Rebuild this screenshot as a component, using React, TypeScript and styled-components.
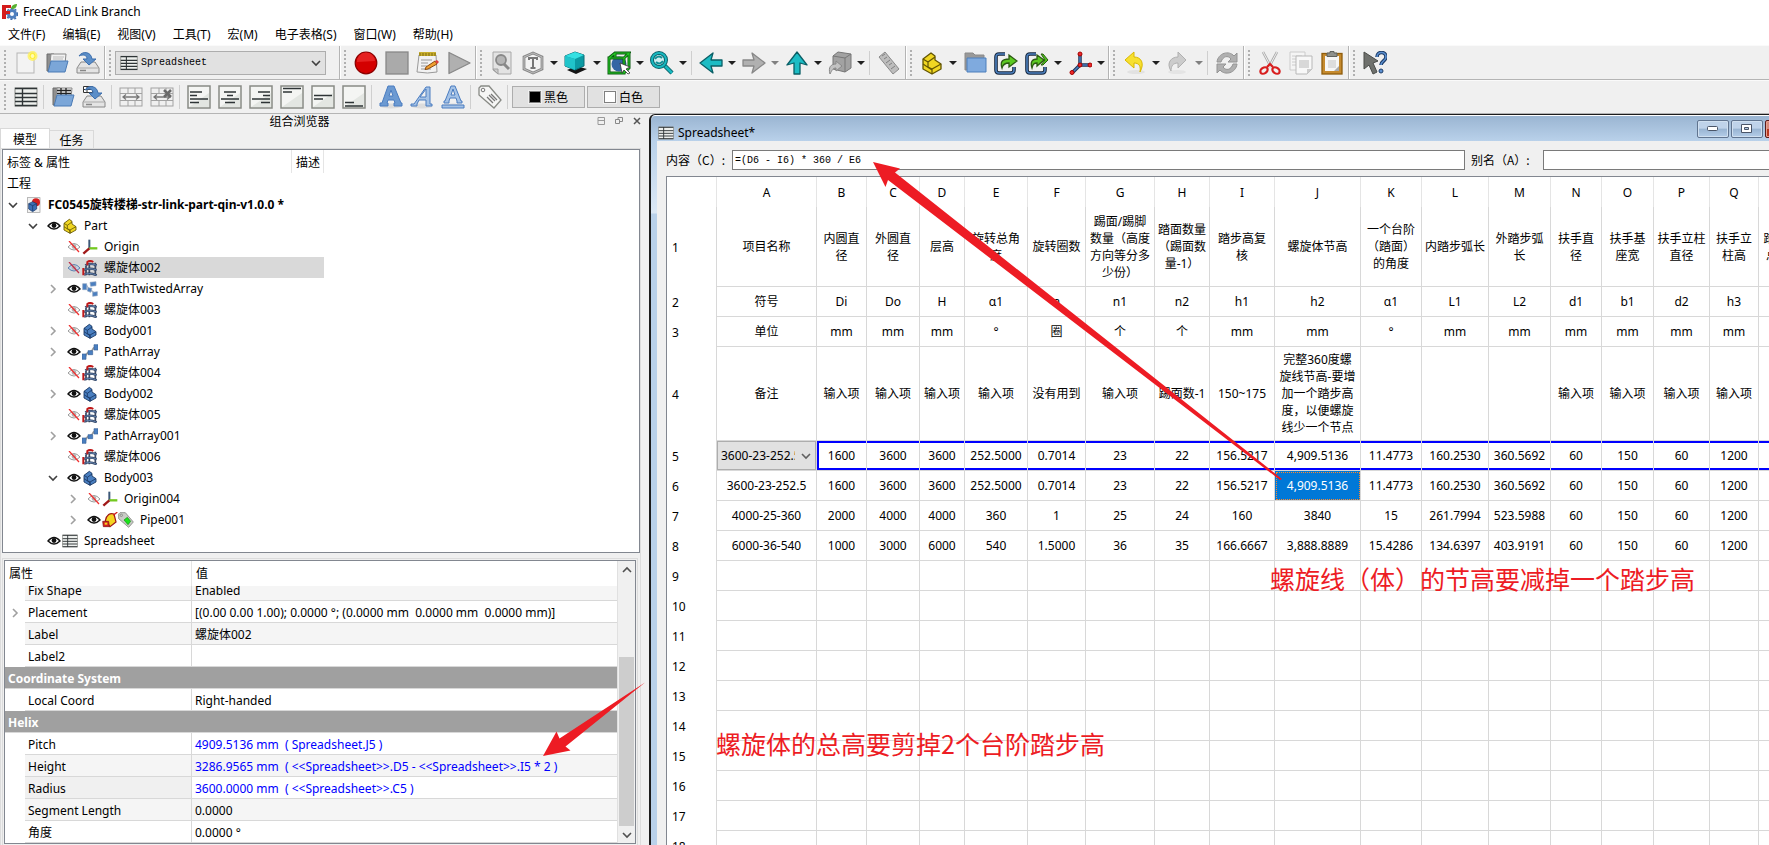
import React from 'react';
import styled, { createGlobalStyle, css } from 'styled-components';

const uiFont = `'Noto Sans', 'Noto Sans CJK SC', sans-serif`;
const cjkFont = `'Noto Sans CJK SC', sans-serif`;
const monoFont = `'Liberation Mono', 'Noto Sans CJK SC', monospace`;

const GlobalStyle = createGlobalStyle`
  *, *::before, *::after { box-sizing: border-box; }
  html, body { margin: 0; padding: 0; background: #f0f0f0; overflow: hidden; }
  body { font-family: ${uiFont}; font-size: 12px; line-height: 16px; color: #000; }
  button, input, select { font: inherit; color: inherit; margin: 0; }
  svg { display: block; flex: none; }
`;

/* ---------- window frame ---------- */

const Window = styled.div`
  position: relative;
  display: flex;
  flex-direction: column;
  height: 100vh;
  min-width: 0;
  overflow: hidden;
  background: #f0f0f0;
`;

const TitleBar = styled.header`
  display: flex;
  align-items: center;
  gap: 5px;
  height: 24px;
  padding-left: 2px;
  background: #fff;
  h1 { margin: 0; font-size: 12px; font-weight: 400; }
`;

const MenuBar = styled.nav`
  display: flex;
  align-items: center;
  gap: 17px;
  height: 21px;
  padding-left: 8px;
  background: #fff;
`;

const MenuItem = styled.button`
  border: 0;
  padding: 0;
  background: none;
  white-space: nowrap;
`;

/* ---------- toolbars ---------- */

const ToolbarRow = styled.div<{ $first?: boolean }>`
  display: flex;
  height: ${p => (p.$first ? 35 : 34)}px;
  flex: none;
  background: #f0f0f0;
  border-top: 1px solid #fafafa;
  border-bottom: 1px solid #b4b4b4;
`;

const Group = styled.div<{ $open?: boolean; $wide?: boolean }>`
  display: flex;
  align-items: center;
  padding-right: ${p => (p.$wide ? 13 : 1)}px;
  border-right: ${p => (p.$open ? 0 : '1px solid #b4b4b4')};
  box-shadow: ${p => (p.$open ? 'none' : '1px 0 0 #fff')};
`;

const Handle = styled.span`
  flex: none;
  width: 2px;
  height: 26px;
  margin: 0 4px;
  background: repeating-linear-gradient(#b0b0b0 0 2px, transparent 2px 4px);
`;

const Tool = styled.button`
  display: flex;
  align-items: center;
  border: 0;
  padding: 0;
  background: none;
  height: 32px;
`;

const ToolIcon = styled.span`
  display: flex;
  justify-content: center;
  width: 31px;
`;

const DropMark = styled.span<{ $dim?: boolean }>`
  width: 12px;
  display: flex;
  justify-content: center;
  color: ${p => (p.$dim ? '#808080' : '#202020')};
`;

const Rule = styled.span`
  flex: none;
  width: 1px;
  height: 24px;
  margin: 0 3px 0 2px;
  background: #cfcfcf;
`;

const Combo = styled.div`
  display: flex;
  align-items: center;
  width: 211px;
  height: 24px;
  padding: 0 4px 0 4px;
  gap: 3px;
  background: #e1e1e1;
  border: 1px solid #adadad;
  select {
    flex: 1;
    min-width: 0;
    appearance: none;
    border: 0;
    padding: 0;
    background: none;
    font-family: ${monoFont};
    font-size: 10px;
  }
`;

const ColorButton = styled.button`
  display: flex;
  align-items: center;
  justify-content: center;
  gap: 3px;
  width: 73px;
  height: 22px;
  margin-left: 1px;
  margin-right: 1px;
  padding: 0;
  border: 1px solid #adadad;
  background: #e1e1e1;
  font-family: ${cjkFont};
`;

const Swatch = styled.span<{ $color: string }>`
  width: 12px;
  height: 12px;
  background: ${p => p.$color};
  border: 1px solid #808080;
  outline: 1px solid #f0f0f0;
`;

/* ---------- dock on the left ---------- */

const Main = styled.main`
  display: grid;
  grid-template-columns: 649px minmax(0, 1fr);
  flex: 1;
  min-height: 0;
`;

const Dock = styled.aside`
  display: flex;
  flex-direction: column;
  min-height: 0;
  min-width: 0;
`;

const DockTitle = styled.div`
  display: grid;
  grid-template-columns: 1fr auto;
  align-items: center;
  height: 14px;
  padding-right: 6px;
  font-family: ${cjkFont};
  h2 { margin: 0; padding-left: 4px; font-size: 12px; line-height: 14px; font-weight: 400; text-align: center; }
`;

const DockButtons = styled.div`
  display: flex;
  gap: 6px;
  button { border: 0; padding: 0; background: none; width: 12px; height: 12px; }
`;

const Tabs = styled.div`
  display: flex;
  align-items: flex-end;
  height: 20px;
`;

const Tab = styled.button<{ $active?: boolean }>`
  height: ${p => (p.$active ? 20 : 18)}px;
  width: ${p => (p.$active ? 50 : 44)}px;
  padding: 0;
  font-family: ${cjkFont};
  border: 1px solid #d9d9d9;
  border-bottom: 0;
  border-left: ${p => (p.$active ? '1px solid #d9d9d9' : 0)};
  background: ${p => (p.$active ? '#fff' : '#f0f0f0')};
`;

const TabPane = styled.div`
  display: flex;
  flex-direction: column;
  flex: 1;
  min-height: 0;
  border: 1px solid #dcdcdc;
  border-bottom: 0;
  margin-right: 8px;
  padding-left: 1px;
`;

const Tree = styled.section`
  flex: none;
  background: #fff;
  border: 1px solid #828790;
  padding-bottom: 1px;
`;

const TreeHeader = styled.div`
  display: grid;
  grid-template-columns: 289px 32px;
  height: 23px;
  span {
    display: flex;
    align-items: center;
    padding-left: 4px;
    padding-top: 2px;
    border-right: 1px solid #e5e5e5;
  }
`;

const TreeRow = styled.div<{ $depth: number }>`
  display: flex;
  align-items: center;
  width: 321px;
  height: 21px;
  padding-left: ${p => p.$depth * 20}px;
`;

const TreeRoot = styled.div`
  height: 21px;
  line-height: 22px;
  padding-left: 4px;
`;

const Toggle = styled.button`
  width: 20px;
  height: 20px;
  display: flex;
  align-items: center;
  justify-content: center;
  border: 0;
  padding: 0;
  background: none;
`;

const NodeBody = styled.div<{ $selected?: boolean; $bold?: boolean }>`
  display: flex;
  align-items: center;
  flex: 1;
  height: 21px;
  padding-left: ${p => (p.$bold ? 3 : 4)}px;
  white-space: nowrap;
  font-weight: ${p => (p.$bold ? 700 : 400)};
  background: ${p => (p.$selected ? '#d9d9d9' : 'none')};
  gap: 1px;
  & > span { padding-left: 5px; }
`;

const Icons = styled.div`
  display: flex;
`;

const PropArea = styled.div`
  display: flex;
  flex: 1;
  min-height: 0;
  margin-top: 5px;
  margin-right: 2px;
  border: 1px solid #dcdcdc;
  border-bottom: 0;
  padding: 1px;
`;

const PropFrame = styled.section`
  display: flex;
  flex: 1;
  min-width: 0;
  background: #fff;
  border: 1px solid #828790;
`;

const PropMain = styled.div`
  display: flex;
  flex-direction: column;
  flex: 1;
  min-width: 0;
  border-right: 1px solid #e0e0e0;
`;

const PropHeader = styled.div`
  display: grid;
  grid-template-columns: 187px 1fr;
  flex: none;
  height: 25px;
  line-height: 25px;
  span { padding-left: 4px; }
  span:first-child { border-right: 1px solid #e5e5e5; }
`;

const PropScroll = styled.div`
  display: flex;
  flex-direction: column;
  justify-content: flex-end;
  flex: 1;
  min-height: 0;
  overflow: hidden;
`;

const PropTable = styled.table`
  flex: none;
  width: 100%;
  table-layout: fixed;
  border-collapse: separate;
  border-spacing: 0;
  th, td {
    padding: 2px 0 0;
    height: 22px;
    text-align: left;
    font-weight: 400;
    white-space: pre;
  }
`;

const PropToggle = styled.td`
  button { height: 18px; }
`;

const PropName = styled.th<{ $bg: string }>`
  background: ${p => p.$bg};
  border-right: 1px solid #d8d8d8;
  border-bottom: 1px solid #d8d8d8;
  && { padding-left: 3px; }
`;

const PropValue = styled.td<{ $bg: string; $bound?: boolean }>`
  background: ${p => p.$bg};
  border-bottom: 1px solid #d8d8d8;
  color: ${p => (p.$bound ? '#0000ff' : '#000')};
  && { padding-left: 3px; }
`;

const PropCategory = styled.th`
  background: #a0a0a0;
  border-bottom: 1px solid #d8d8d8;
  color: #fff;
  && { padding-left: 3px; font-weight: 700; }
`;

const ScrollBar = styled.div`
  display: flex;
  flex-direction: column;
  align-items: center;
  width: 17px;
  background: #f0f0f0;
  button {
    display: flex;
    align-items: center;
    justify-content: center;
    width: 17px;
    height: 17px;
    border: 0;
    padding: 0;
    background: none;
  }
`;

const ScrollTrack = styled.div`
  display: flex;
  flex-direction: column;
  justify-content: flex-end;
  flex: 1;
  width: 15px;
  div { height: 68%; background: #cdcdcd; }
`;

/* ---------- spreadsheet window ---------- */

const SheetWindow = styled.section`
  display: flex;
  flex-direction: column;
  min-width: 0;
  min-height: 0;
  border-left: 2px solid #1c1c1c;
  border-top: 1px solid #1c1c1c;
  border-top-left-radius: 6px;
  background: linear-gradient(#99b4d1, #b9d1ea 26px, #dce8f5 98px, #b9d1ea 99px);
  box-shadow: inset 0 1px 0 #fff;
`;

const SheetTitle = styled.div`
  display: flex;
  align-items: center;
  gap: 4px;
  height: 26px;
  flex: none;
  padding-left: 7px;
  padding-top: 10px;
  h2 { flex: 1; margin: 0; font-size: 12px; line-height: 16px; font-weight: 400; }
`;

const Caption = styled.div`
  display: flex;
  gap: 2px;
  flex: none;
  width: 72px;
  margin-top: -8px;
  overflow: hidden;
`;

const CaptionButton = styled.button<{ $close?: boolean }>`
  display: flex;
  flex: none;
  align-items: center;
  justify-content: center;
  width: 32px;
  height: 18px;
  padding: 0;
  border: 1px solid ${p => (p.$close ? '#5b1a1a' : '#60748f')};
  border-radius: 2px;
  box-shadow: inset 0 0 0 1px ${p => (p.$close ? '#e8a090' : '#d0e0f0')};
  background: ${p =>
    p.$close
      ? 'linear-gradient(#d88a7a 50%, #b83820 50%)'
      : 'linear-gradient(#bfd3ea 45%, #98b4d2 50%, #b4cde8)'};
`;

const SheetBody = styled.div`
  display: flex;
  flex-direction: column;
  flex: 1;
  min-height: 0;
  margin-left: 6px;
  padding: 9px 0 0 9px;
  background: #f0f0f0;
`;

const FormulaRow = styled.div`
  display: grid;
  grid-template-columns: 66px minmax(0, 733fr) 78px minmax(0, 226fr);
  align-items: center;
  flex: none;
  height: 20px;
  margin-bottom: 6px;
  font-family: ${cjkFont};
  overflow: hidden;
`;

const FieldLabel = styled.label<{ $gap?: boolean }>`
  padding-left: ${p => (p.$gap ? 6 : 0)}px;
  white-space: nowrap;
`;

const Field = styled.input<{ $cut?: boolean }>`
  width: 100%;
  height: 20px;
  padding: 0 2px;
  border: 1px solid #7a7a7a;
  border-right-width: ${p => (p.$cut ? 0 : 1)}px;
  border-radius: 0;
  background: #fff;
  && { font-family: ${monoFont}; font-size: 10px; }
  outline: 0;
`;

const GridFrame = styled.div`
  flex: 1;
  min-height: 0;
  overflow: hidden;
  background: #fff;
  border-top: 1px solid #828790;
  border-left: 1px solid #828790;
`;

const Grid = styled.table`
  width: 1186px;
  table-layout: fixed;
  border-collapse: separate;
  border-spacing: 0;
  text-align: center;
  white-space: pre;
  line-height: 17px;
  th, td { padding: 0; font-weight: 400; overflow: hidden; }
`;

const ColHead = styled.th`
  height: 30px;
  border-right: 1px solid #e5e5e5;
`;

const RowHead = styled.th`
  border-right: 1px solid #d8d8d8;
  text-align: left;
  && { padding-left: 5px; }
`;

const Row = styled.tr<{ $h: number }>`
  height: ${p => p.$h}px;
`;

const Cell = styled.td<{ $band?: boolean; $bandStart?: boolean; $current?: boolean }>`
  border-right: 1px solid #d8d8d8;
  border-bottom: 1px solid #d8d8d8;
  ${p =>
    p.$band &&
    css`
      box-shadow: inset 0 2px 0 #0000ff, inset 0 -2px 0 #0000ff${p.$bandStart ? ', inset 2px 0 0 #0000ff' : ''};
    `}
  ${p =>
    p.$current &&
    css`
      background: #0078d7;
      color: #fff;
      outline: 1px dotted #ff8728;
      outline-offset: -2px;
    `}
`;

const CellCombo = styled.div`
  display: flex;
  align-items: center;
  height: 29px;
  padding: 0 4px 0 3px;
  gap: 6px;
  border: 1px solid #adadad;
  background: #e1e1e1;
  select { flex: 1; min-width: 0; appearance: none; border: 0; padding: 0; background: none; }
`;

/* ---------- red annotations laid over the window ---------- */

const Arrows = styled.svg`
  position: absolute;
  left: 0;
  top: 0;
  pointer-events: none;
`;

const Note = styled.p<{ $x: number; $y: number }>`
  position: absolute;
  left: ${p => p.$x}px;
  top: ${p => p.$y}px;
  margin: 0;
  font-family: ${cjkFont};
  font-size: 25px;
  line-height: 32px;
  color: #ed1c24;
  white-space: nowrap;
  pointer-events: none;
`;

/* ---------- drawings ---------- */

const Svg = ({ s = 24, children }: { s?: number; children: React.ReactNode }) => (
  <svg width={s} height={s} viewBox="0 0 24 24" fill="none" aria-hidden="true">{children}</svg>
);

const TableArt = ({ s = 24 }: { s?: number }) => (
  <Svg s={s}>
    <rect x="1" y="3" width="22" height="18" fill="#eef0ee" stroke="#888a85" />
    <path d="M1 3.5h22M1 8.5h22M1 12.5h22M1 16.5h22M1 20.5h22M8.5 3v18" stroke="#2e3436" strokeWidth="1.4" />
  </Svg>
);

const FolderArt = ({ grid }: { grid?: boolean }) => (
  <Svg>
    <path d="M2 3h7l1 2h8v15H2z" fill="#8f8f8f" stroke="#6c6c6c" />
    <path d="M6 3h15l-1 10H5z" fill="#f2f2f2" stroke="#888" />
    {grid ? <path d="M6 5.5h14M6 8.5h14M10 3v8M15 3v8" stroke="#222" strokeWidth="1.3" /> : <path d="M8 6h11M8 8h10" stroke="#bbb" />}
    <path d="M6 10h17l-3 11H3z" fill="#7ba6d8" stroke="#4a7ab5" />
  </Svg>
);

const SaveArt = ({ grid }: { grid?: boolean }) => (
  <Svg>
    <path d="M5 11h14l4 6v5H1v-5z" fill="#e4e4e4" stroke="#888" />
    <path d="M1.5 17h21" stroke="#aaa" />
    <path d="M4 19.5h6" stroke="#888" strokeWidth="1.5" />
    {grid && <path d="M1.5 1.5h9v6h-9zM1.5 4.5h9M5 1.5v6" fill="#fff" stroke="#333" />}
    <path d="M3 5C6 0 15 0 16 8h4l-7 6-6-6h4C11 4 7 3 3 5z" fill="#5b8ec8" stroke="#3d6fae" />
  </Svg>
);

const PageArt = ({ children }: { children: React.ReactNode }) => (
  <Svg>
    <rect x="1" y="1" width="22" height="22" fill="#f4f5f3" stroke="#888a85" strokeWidth="1.5" />
    <path d="M2 22L22 8v14z" fill="#e3e6e2" />
    {children}
  </Svg>
);

const alignLines = (d: string) => <PageArt><path d={d} stroke="#2e3436" strokeWidth="1.7" /></PageArt>;

const MergeArt = ({ split }: { split?: boolean }) => (
  <Svg>
    <rect x="1" y="3" width="22" height="18" fill="#f0f0f0" stroke="#a2a2a2" />
    <path d="M1 8.5h22M1 15.5h22M9 3v5M16 3v5M9 16v5M16 16v5" stroke="#a2a2a2" />
    <path d="M4 12h16M7 9.5L4 12l3 2.5M17 9.5l3 2.5-3 2.5" stroke="#777" strokeWidth="1.3" />
    {split && <path d="M14 5l7 7M21 5l-7 7" stroke="#6a6a6a" strokeWidth="2.5" />}
  </Svg>
);

const LetterArt = ({ kind }: { kind: 'bold' | 'italic' | 'under' }) => (
  <Svg>
    <ellipse cx="12" cy="21" rx="11" ry="2.5" fill="#dcdcdc" />
    {kind === 'italic' ? (
      <path d="M1 21h6v-2l2-4h7v6h6v-2h-2V2h-4L4 19H1zM10 12l6-8v8z" fill="#a4c2e6" stroke="#4a7cc0" fillRule="evenodd" />
    ) : kind === 'bold' ? (
      <path d="M1 21h8v-3H8l1-3h6l1 3h-1v3h8v-3h-1L15 1H9L3 18H1zM10 11l2-6 2 6z" fill="#6c9ad2" stroke="#4a7cc0" fillRule="evenodd" />
    ) : (
      <path d="M1 23h22v-3H1zM3 18h5v-2l1-3h6l1 3v2h5v-2h-1L14 1h-4L4 16H3zM10 10l2-6 2 6z" fill="#a4c2e6" stroke="#4a7cc0" fillRule="evenodd" />
    )}
  </Svg>
);

const TagArt = ({ s = 24, green }: { s?: number; green?: boolean }) => (
  <Svg s={s}>
    <path d="M1 3l2-2h8l12 14-7 8L1 10z" fill={green ? '#c9ccc6' : '#f6f6f5'} stroke="#888a85" strokeWidth="1.3" />
    <circle cx="5" cy="5" r="1.8" stroke="#777" />
    {green ? <path d="M9 12l5-4 5 6-4 5z" fill="#19e619" stroke="#168a16" /> : <path d="M11 10l6 6M13 9l6 6M9 12l6 6" stroke="#777" strokeWidth="1.3" />}
  </Svg>
);

const CubeArt = () => (
  <Svg>
    <path d="M3 19l9-4 11 3-11 5z" fill="#151515" />
    <path d="M1 5l10-4 9 3v11l-9 4-10-4z" fill="#0c9aa3" stroke="#0a6f78" />
    <path d="M1 5l10-4 9 3-9 4z" fill="#34e0e2" />
    <path d="M1 5l10 3v11L1 15z" fill="#20c4ca" />
  </Svg>
);

const BoxSelArt = () => (
  <Svg>
    <circle cx="12" cy="13" r="7.5" fill="#3465a4" />
    <path d="M2 7h15v15H2zM2 7l6-5h14l-5 5M22 2v15l-5 5M8 2v4" stroke="#0b5a10" strokeWidth="3" />
    <path d="M2 7h15v15H2zM2 7l6-5h14l-5 5M22 2v15l-5 5M8 2v4" stroke="#22c522" strokeWidth="1.2" />
    <path d="M13 12l10 4-4 2 4 4-2 1-4-4-2 3z" fill="#fff" stroke="#333" strokeWidth=".8" />
  </Svg>
);

const LensArt = () => (
  <Svg>
    <path d="M14 14l8 8" stroke="#0a5f66" strokeWidth="4.5" />
    <path d="M14 14l8 8" stroke="#18b8c0" strokeWidth="2.5" />
    <circle cx="9" cy="9" r="7" fill="#cfeef0" stroke="#0a5f66" strokeWidth="4" />
    <circle cx="9" cy="9" r="7" stroke="#18b8c0" strokeWidth="2" />
    <path d="M5 8c2-3 5-3 7-1M13 10c-2 3-5 3-7 1" stroke="#0f8f96" strokeWidth="2" />
  </Svg>
);

const ArrowArt = ({ dir, dim }: { dir: 'l' | 'r' | 'u'; dim?: boolean }) => {
  const turn = dir === 'l' ? 0 : dir === 'u' ? 90 : 180;
  return (
    <Svg>
      <g transform={`rotate(${turn} 12 12)`}>
        <path d="M1 12L14 2l-2 7h11v6H12l2 7z" fill={dim ? '#b0b0b0' : '#1cbcc4'} stroke={dim ? '#888' : '#0a5f66'} strokeWidth="1.3" strokeLinejoin="round" />
      </g>
    </Svg>
  );
};

const IsoArt = ({ color, dark }: { color: string; dark: string }) => (
  <>
    <path d="M3 12V8l8-6 4 3v4l6 4v5l-9 5-9-5z" fill={color} stroke={dark} strokeWidth="1.3" strokeLinejoin="round" />
    <path d="M3 8l5 3 7-5M8 11v5l4 2 9-5M3 13l9 6v4M12 18v5" stroke={dark} strokeWidth="1.2" />
  </>
);

const LinkArt = ({ twice }: { twice?: boolean }) => (
  <Svg>
    <path d="M11 3H5Q2 3 2 6v13q0 3 3 3h12q3 0 3-3v-3" stroke="#16263c" strokeWidth="3.6" />
    <path d="M11 3H5Q2 3 2 6v13q0 3 3 3h12q3 0 3-3v-3" stroke="#4b7fbd" strokeWidth="1.6" />
    {twice && <path d="M16 3h2l5 6-5 5h-2l4-5z" fill="#4fc51b" stroke="#2c5a12" />}
    <path d={twice ? 'M7 17c-2-6 0-9 5-9V4l7 5-7 6v-3c-3 0-4 1-5 5z' : 'M8 17c-2-6 0-9 7-9V4l8 6-8 6v-4c-4 0-6 1-7 5z'} fill="#5cc922" stroke="#2c5a12" strokeWidth="1.3" />
  </Svg>
);

const AxesArt = () => (
  <Svg>
    <path d="M12 3v11M12 14h10M12 14l-8 8" stroke="#1c3354" strokeWidth="3.5" />
    <path d="M12 3v11M12 14h10M12 14l-8 8" stroke="#4a7ec0" strokeWidth="1.5" />
    {[[12, 3], [12, 14], [22, 14], [4, 21.5]].map(([x, y]) => <circle key={`${x}-${y}`} cx={x} cy={y} r="2" fill="#ef2929" stroke="#a40000" />)}
  </Svg>
);

const art: Record<string, React.ReactNode> = {
  new: <Svg><rect x="3" y="2" width="17" height="20" fill="#f3f3f3" stroke="#b5b5b5" /><circle cx="18.5" cy="5" r="5" fill="#fff15a" opacity=".8" /><circle cx="18.5" cy="5" r="2.5" fill="#fffbb0" stroke="#ffee20" /></Svg>,
  open: <FolderArt />,
  save: <SaveArt />,
  record: <Svg><circle cx="12" cy="12" r="10.8" fill="#d40000" stroke="#8a0000" strokeWidth="1.2" /><path d="M3 11a9 9 0 0 1 18-1" fill="#e62222" /></Svg>,
  stop: <Svg><rect x="1" y="1" width="22" height="22" fill="#aaa" stroke="#888" strokeWidth="1.3" /></Svg>,
  note: <Svg><path d="M3 4h17l1 17q-9 2-20 0z" fill="#f2f2f2" stroke="#999" /><path d="M3 1h17v4H3z" fill="#c8ae2e" /><path d="M4 2v3M7 2v3M10 2v3M13 2v3M16 2v3M19 2v3" stroke="#7d6a10" /><path d="M5 9h11M5 12h7M5 15h6M5 18h10" stroke="#999" /><path d="M10 16l9-6 2 3-9 5-3 .5z" fill="#f0a030" stroke="#8a4a10" /><path d="M19 10l2-1 2 2-2 2z" fill="#e04040" /></Svg>,
  play: <Svg><path d="M2 1.5L23 12 2 22.5z" fill="#b0b0b0" stroke="#888" strokeWidth="1.3" strokeLinejoin="round" /></Svg>,
  preview: <Svg><path d="M3 1h18v22H8l-5-4z" fill="#e3e3e3" stroke="#a8a8a8" /><path d="M3 18l5 5v-5z" fill="#ccc" stroke="#a0a0a0" /><circle cx="11" cy="9" r="5" fill="#b5b5b5" stroke="#888" strokeWidth="1.8" /><path d="M14 13l5 5" stroke="#888" strokeWidth="3" /></Svg>,
  text: <Svg><path d="M12 2l9 4v12l-9 4-9-4V6z" fill="#f4f4f4" stroke="#888" strokeWidth="2.8" /><path d="M12 2l9 4v12l-9 4-9-4V6z" stroke="#ccc" strokeWidth=".8" /><path d="M8 9V7h8v2M12 7v10M9.5 17h5" stroke="#777" strokeWidth="2" /></Svg>,
  cube: <CubeArt />,
  boxsel: <BoxSelArt />,
  lens: <LensArt />,
  back: <ArrowArt dir="l" />,
  forward: <ArrowArt dir="r" dim />,
  up: <ArrowArt dir="u" />,
  boxlink: <Svg><path d="M5 5l5-4 13 2v14l-6 4-12-3z" fill="#a2a2a2" stroke="#777" /><path d="M5 5l12 2v14M17 7l6-4" stroke="#777" /><path d="M2 23c-2-7 1-10 6-10v-3l6 5-6 5v-3c-3 0-4 2-6 6z" fill="#c2c2c2" stroke="#888" /></Svg>,
  ruler: <Svg><path d="M2 6l6-5 14 17-6 5z" fill="#bdbdbd" stroke="#8a8a8a" /><path d="M8 3L5 5M10 6L7 8M13 9l-4 3M15 12l-3 2M18 15l-4 3" stroke="#808080" /></Svg>,
  part: <Svg><IsoArt color="#f0d622" dark="#635503" /></Svg>,
  group: <Svg><path d="M2 2h8l2 2h9v15H2z" fill="#999" stroke="#8a8a8a" /><path d="M4 7h19v14H4z" fill="#7faade" stroke="#4d7ebc" /></Svg>,
  link: <LinkArt />,
  links: <LinkArt twice />,
  axes: <AxesArt />,
  undo: <Svg><ellipse cx="13" cy="21" rx="9" ry="2" fill="#e2e2e2" /><path d="M2 9l9-8v5c7 0 11 6 6 15 1-6-1-9-6-9v5z" fill="#f7e030" stroke="#d9b800" /></Svg>,
  redo: <Svg><ellipse cx="11" cy="21" rx="9" ry="2" fill="#e4e4e4" /><path d="M20 9l-8-8v5c-7 0-12 6-7 14 0-5 2-8 7-8v5z" fill="#ccc" stroke="#b0b0b0" /></Svg>,
  refresh: <Svg><path d="M2 11C3 2 14-1 19 5l3-3v9h-9l3-3C13 4 8 5 6 11zM22 13c-1 9-12 12-17 6l-3 3v-9h9l-3 3c3 4 8 3 10-3z" fill="#b0b0b0" stroke="#949494" /></Svg>,
  cut: <Svg><path d="M5 1l8 15M19 1l-8 15" stroke="#aaa" strokeWidth="2.6" /><path d="M5 1l8 15M19 1l-8 15" stroke="#eee" strokeWidth="1" /><ellipse cx="6" cy="19.5" rx="4" ry="2.8" transform="rotate(-35 6 19.5)" stroke="#d81e1e" strokeWidth="2.2" /><ellipse cx="18" cy="19.5" rx="4" ry="2.8" transform="rotate(35 18 19.5)" stroke="#d81e1e" strokeWidth="2.2" /><path d="M9 16l3-3 3 3" stroke="#d81e1e" strokeWidth="2.2" /></Svg>,
  copy: <Svg><path d="M1 1h15v18H1z" fill="#f5f5f5" stroke="#ccc" /><path d="M3 5h10M3 8h4M3 11h4M3 14h4" stroke="#ccc" /><path d="M7 5h16v13l-5 5H7z" fill="#f8f8f8" stroke="#b8b8b8" /><path d="M10 9h10v8H10z" fill="#d8d8d8" /><path d="M18 23v-5h5z" fill="#ccc" /></Svg>,
  paste: <Svg><rect x="2" y="2.5" width="20" height="20.5" fill="#c58a2e" stroke="#8f5c0c" strokeWidth="1.3" /><path d="M5 5h14v15H5z" fill="#f6f6f6" /><path d="M8 9h8v8H8z" fill="#ddd" /><path d="M14 20l5-5v5z" fill="#aaa" /><path d="M7 2h3V.5h4V2h3v3.5H7z" fill="#8f918c" stroke="#60625e" /></Svg>,
  help: <Svg><path d="M1 1l14 9-5 2 4 9-4 2-4-9-5 4z" fill="#6f716d" stroke="#4a4c49" /><path d="M14 6c0-6 9-6 9 0 0 4-5 4-5 8" stroke="#1e3c66" strokeWidth="3.6" /><path d="M14 6c0-6 9-6 9 0 0 4-5 4-5 8" stroke="#5b8fd0" strokeWidth="1.6" /><circle cx="18" cy="20" r="2" fill="#5b8fd0" stroke="#1e3c66" /></Svg>,
  table: <TableArt />,
  openSheet: <FolderArt grid />,
  saveSheet: <SaveArt grid />,
  merge: <MergeArt />,
  split: <MergeArt split />,
  left: alignLines('M3 7h12M3 10.5h7M3 14h18M3 17.5h9'),
  center: alignLines('M6 7h12M9 10.5h6M3 14h18M7 17.5h10'),
  right: alignLines('M9 7h12M14 10.5h7M3 14h18M12 17.5h9'),
  top: alignLines('M3 3.5h18M3 7h9'),
  middle: alignLines('M3 10.5h18M3 14h9'),
  bottom: alignLines('M3 17.5h9M3 21h18'),
  bold: <LetterArt kind="bold" />,
  italic: <LetterArt kind="italic" />,
  under: <LetterArt kind="under" />,
  tag: <TagArt />,
};

const helix = (
  <Svg s={16}>
    <path d="M6 23V9M20 23V4M11 23V6" stroke="#3b4a66" strokeWidth="2.600" />
    <path d="M5 8c4-3 12-2 17 0M3 15c5-3 13-2 19 0M3 22c5-3 13-2 19 1" stroke="#32435f" strokeWidth="3.400" />
    <path d="M5 8c4-3 12-2 17 0M3 15c5-3 13-2 19 0M3 22c5-3 13-2 19 1" stroke="#6d93c6" strokeWidth="1.200" />
    <path d="M2 23V12M8 8V3q4-3 9 0" stroke="#c01a1a" strokeWidth="3" />
  </Svg>
);
const body = <Svg s={16}><IsoArt color="#4a7fc0" dark="#16345f" /></Svg>;
const origin = <Svg s={16}><path d="M11 1v13" stroke="#3d5878" strokeWidth="3" /><path d="M11 14h12" stroke="#73c820" strokeWidth="3.5" /><path d="M11 14l-9 8" stroke="#a01818" strokeWidth="3.5" /></Svg>;
const pathArray = <Svg s={16}><path d="M5 19C7 8 14 16 18 5" stroke="#999" strokeWidth="2.5" /><path d="M0 15h6v8H0zM9 10h7v6H9zM18 1h6v8h-6z" fill="#4a7fc0" stroke="#3b639a" /></Svg>;
const twisted = <Svg s={16}><path d="M5 6c5 0 2 6 8 8s4 6 8 6" stroke="#a5b2c4" strokeWidth="2" /><path d="M1 4h6v9H1zM12 2l9-1v6l-8 1zM9 10l6 1-2 6-5-2zM16 17l7-1v6l-7 1z" fill="#4a7fc0" stroke="#8ea3c0" /></Svg>;

const nodeArt: Record<string, React.ReactNode> = {
  doc: <Svg s={16}><rect x="2" y="1" width="19" height="22" fill="#f2f2f2" stroke="#999" /><circle cx="15" cy="8" r="6" fill="#d42020" /><path d="M4 10l6-3 6 3v8l-6 4-6-4z" fill="#3d6fb4" stroke="#16345f" /><path d="M4 10l6 3 6-3M10 13v8" stroke="#16345f" /></Svg>,
  part: <Svg s={16}><IsoArt color="#f0d622" dark="#635503" /></Svg>,
  origin, helix, body, pathArray, twisted,
  pipe: <Svg s={16}><path d="M5 13C7 4 12 1 18 3l3 12-9 7z" fill="#f3d421" stroke="#a01818" strokeWidth="1.8" /><path d="M1 14h9l1 8H2z" fill="#d42020" stroke="#7a0c0c" /><path d="M4 16h4v3H4z" fill="#f3d421" /><path d="M17 5l6-5" stroke="#d42020" strokeWidth="2" /></Svg>,
  tag: <TagArt s={16} green />,
  table: <TableArt s={16} />,
};

const Eye = ({ off, blue }: { off?: boolean; blue?: boolean }) => (
  <svg width="14" height="12" viewBox="0 0 14 12" fill="none" aria-hidden="true">
    <path d="M1 6q6-7 12 0-6 6-12 0z" fill={blue ? '#c3d4ea' : '#fff'} stroke={off ? (blue ? '#5d82b0' : '#999') : '#111'} strokeWidth={off ? 1 : 1.4} />
    <circle cx="7" cy="5.5" r="2.4" fill={off ? '#b5b5b5' : '#111'} />
    {off && <path d="M2 0l10 11" stroke={blue ? '#c0304a' : '#f03030'} strokeWidth="1.3" />}
  </svg>
);

const Chevron = ({ dir, tone = '#404040' }: { dir: 'down' | 'right' | 'up'; tone?: string }) => (
  <svg width="10" height="10" viewBox="0 0 10 10" fill="none" aria-hidden="true">
    <path d={dir === 'down' ? 'M1 3l4 4 4-4' : dir === 'up' ? 'M1 7l4-4 4 4' : 'M3 1l4 4-4 4'} stroke={tone} strokeWidth="1.6" />
  </svg>
);

const AppLogo = () => (
  <svg width="16" height="16" viewBox="0 0 16 16" aria-hidden="true">
    <circle cx="10" cy="10" r="3.5" fill="none" stroke="#4f7fbe" strokeWidth="3" />
    <circle cx="10" cy="10" r="5.5" fill="none" stroke="#3f6fae" strokeWidth="1.5" strokeDasharray="2 2" />
    <path d="M0 1h9v3H4v3h4v3H4v5H0z" fill="#d41c1c" />
    <path d="M9 4c1-3 3-4 6-4 0 3-2 5-5 5z" fill="#58b030" />
  </svg>
);

/* ---------- data ---------- */

type ToolSpec = [string, string, ('menu' | 'dim')?] | '|';

const ToolList = ({ items }: { items: ToolSpec[] }) => (
  <>
    {items.map((it, i) =>
      it === '|' ? (
        <Rule key={i} />
      ) : (
        <Tool key={i} type="button" aria-label={it[1]}>
          <ToolIcon>{art[it[0]]}</ToolIcon>
          {it[2] && (
            <DropMark $dim={it[2] === 'dim'}>
              <svg width="8" height="4" viewBox="0 0 8 4" aria-hidden="true"><path d="M0 0h8L4 4z" fill="currentColor" /></svg>
            </DropMark>
          )}
        </Tool>
      )
    )}
  </>
);

const menus = ['文件(F)', '编辑(E)', '视图(V)', '工具(T)', '宏(M)', '电子表格(S)', '窗口(W)', '帮助(H)'];

const viewTools: ToolSpec[] = [
  ['preview', '适合全部'], ['text', '文本', 'menu'], ['cube', '立方体', 'menu'], ['boxsel', '框选', 'menu'], ['lens', '缩放', 'menu'], '|',
  ['back', '后退', 'menu'], ['forward', '前进', 'dim'], ['up', '向上', 'menu'], ['boxlink', '转到链接', 'menu'], '|', ['ruler', '测量'],
];
const structureTools: ToolSpec[] = [['part', '零件', 'menu'], ['group', '组'], ['link', '链接'], ['links', '链接组', 'menu'], ['axes', '坐标', 'menu']];
const editTools: ToolSpec[] = [['undo', '撤销', 'menu'], ['redo', '重做', 'dim'], '|', ['refresh', '刷新']];
const clipTools: ToolSpec[] = [['cut', '剪切'], ['copy', '复制'], ['paste', '粘贴']];
const sheetTools: ToolSpec[] = [
  ['table', '新建表格'], '|', ['openSheet', '导入'], ['saveSheet', '导出'], '|', ['merge', '合并'], ['split', '拆分'], '|',
  ['left', '左对齐'], ['center', '居中'], ['right', '右对齐'], ['top', '顶部'], ['middle', '中部'], ['bottom', '底部'], '|',
  ['bold', '粗体'], ['italic', '斜体'], ['under', '下划线'], '|', ['tag', '别名'], '|',
];

type Node = { depth: number; label: string; icons: string[]; eye?: 'on' | 'off'; open?: boolean; closed?: boolean; selected?: boolean; bold?: boolean };

const nodes: Node[] = [
  { depth: 0, label: 'FC0545旋转楼梯-str-link-part-qin-v1.0.0 *', icons: ['doc'], open: true, bold: true },
  { depth: 1, label: 'Part', icons: ['part'], eye: 'on', open: true },
  { depth: 2, label: 'Origin', icons: ['origin'], eye: 'off' },
  { depth: 2, label: '螺旋体002', icons: ['helix'], eye: 'off', selected: true },
  { depth: 2, label: 'PathTwistedArray', icons: ['twisted'], eye: 'on', closed: true },
  { depth: 2, label: '螺旋体003', icons: ['helix'], eye: 'off' },
  { depth: 2, label: 'Body001', icons: ['body'], eye: 'off', closed: true },
  { depth: 2, label: 'PathArray', icons: ['pathArray'], eye: 'on', closed: true },
  { depth: 2, label: '螺旋体004', icons: ['helix'], eye: 'off' },
  { depth: 2, label: 'Body002', icons: ['body'], eye: 'on', closed: true },
  { depth: 2, label: '螺旋体005', icons: ['helix'], eye: 'off' },
  { depth: 2, label: 'PathArray001', icons: ['pathArray'], eye: 'on', closed: true },
  { depth: 2, label: '螺旋体006', icons: ['helix'], eye: 'off' },
  { depth: 2, label: 'Body003', icons: ['body'], eye: 'on', open: true },
  { depth: 3, label: 'Origin004', icons: ['origin'], eye: 'off', closed: true },
  { depth: 3, label: 'Pipe001', icons: ['pipe', 'tag'], eye: 'on', closed: true },
  { depth: 1, label: 'Spreadsheet', icons: ['table'], eye: 'on' },
];

type Prop = { name: string; value?: string; nameBg?: string; bg?: string; bound?: boolean; toggle?: boolean };
const tint = '#f5f5f5';

const props: Prop[] = [
  { name: 'Fix Shape', value: 'Enabled', bg: tint },
  { name: 'Placement', value: '[(0.00 0.00 1.00); 0.0000 °; (0.0000 mm  0.0000 mm  0.0000 mm)]', toggle: true },
  { name: 'Label', value: '螺旋体002', bg: tint },
  { name: 'Label2', value: '' },
  { name: 'Coordinate System' },
  { name: 'Local Coord', value: 'Right-handed' },
  { name: 'Helix' },
  { name: 'Pitch', value: '4909.5136 mm  ( Spreadsheet.J5 )', bound: true },
  { name: 'Height', value: '3286.9565 mm  ( <<Spreadsheet>>.D5 - <<Spreadsheet>>.I5 * 2 )', bg: tint, bound: true },
  { name: 'Radius', value: '3600.0000 mm  ( <<Spreadsheet>>.C5 )', nameBg: '#f0f0f0', bound: true },
  { name: 'Segment Length', value: '0.0000', bg: tint },
  { name: '角度', value: '0.0000 °' },
];

const columns: [string, number][] = [
  ['A', 100], ['B', 50], ['C', 53], ['D', 45], ['E', 63], ['F', 58], ['G', 69], ['H', 55], ['I', 65], ['J', 86],
  ['K', 61], ['L', 67], ['M', 62], ['N', 51], ['O', 52], ['P', 56], ['Q', 49], ['R', 94],
];

const sheet: { h: number; cells: string[] }[] = [
  { h: 80, cells: ['项目名称', '内圆直\n径', '外圆直\n径', '层高', '旋转总角\n度', '旋转圈数', '踢面/踢脚\n数量（高度\n方向等分多\n少份）', '踏面数量\n（踢面数\n量-1）', '踏步高复\n核', '螺旋体节高', '一个台阶\n（踏面）\n的角度', '内踏步弧长', '外踏步弧\n长', '扶手直\n径', '扶手基\n座宽', '扶手立柱\n直径', '扶手立\n柱高', '踏步立柱中心点\n总数量统计值1'] },
  { h: 30, cells: ['符号', 'Di', 'Do', 'H', 'α1', 'n', 'n1', 'n2', 'h1', 'h2', 'α1', 'L1', 'L2', 'd1', 'b1', 'd2', 'h3'] },
  { h: 30, cells: ['单位', 'mm', 'mm', 'mm', '°', '圈', '个', '个', 'mm', 'mm', '°', 'mm', 'mm', 'mm', 'mm', 'mm', 'mm'] },
  { h: 94, cells: ['备注', '输入项', '输入项', '输入项', '输入项', '没有用到', '输入项', '踢面数-1', '150~175', '完整360度螺\n旋线节高-要增\n加一个踏步高\n度，以便螺旋\n线少一个节点', '', '', '', '输入项', '输入项', '输入项', '输入项'] },
  { h: 30, cells: ['3600-23-252.5', '1600', '3600', '3600', '252.5000', '0.7014', '23', '22', '156.5217', '4,909.5136', '11.4773', '160.2530', '360.5692', '60', '150', '60', '1200'] },
  { h: 30, cells: ['3600-23-252.5', '1600', '3600', '3600', '252.5000', '0.7014', '23', '22', '156.5217', '4,909.5136', '11.4773', '160.2530', '360.5692', '60', '150', '60', '1200'] },
  { h: 30, cells: ['4000-25-360', '2000', '4000', '4000', '360', '1', '25', '24', '160', '3840', '15', '261.7994', '523.5988', '60', '150', '60', '1200'] },
  { h: 30, cells: ['6000-36-540', '1000', '3000', '6000', '540', '1.5000', '36', '35', '166.6667', '3,888.8889', '15.4286', '134.6397', '403.9191', '60', '150', '60', '1200'] },
  ...Array.from({ length: 10 }, () => ({ h: 30, cells: [] as string[] })),
];

/* ---------- page ---------- */

const Toolbars = () => (
  <>
    <ToolbarRow $first>
      <Group><Handle /><ToolList items={[['new', '新建'], ['open', '打开'], ['save', '保存']]} /></Group>
      <Group $wide>
        <Handle />
        <Combo>
          <TableArt s={18} />
          <select aria-label="工作台"><option>Spreadsheet</option></select>
          <Chevron dir="down" />
        </Combo>
      </Group>
      <Group><Handle /><ToolList items={[['record', '录制'], ['stop', '停止'], ['note', '宏'], ['play', '执行']]} /></Group>
      <Group><Handle /><ToolList items={viewTools} /></Group>
      <Group><Handle /><ToolList items={structureTools} /></Group>
      <Group><Handle /><ToolList items={editTools} /></Group>
      <Group><Handle /><ToolList items={clipTools} /></Group>
      <Group $open><Handle /><ToolList items={[['help', '这是什么']]} /></Group>
    </ToolbarRow>
    <ToolbarRow>
      <Group $open>
        <Handle />
        <ToolList items={sheetTools} />
        <ColorButton type="button"><Swatch $color="#000" />黑色</ColorButton>
        <ColorButton type="button"><Swatch $color="#fff" />白色</ColorButton>
      </Group>
    </ToolbarRow>
  </>
);

const ModelTree = () => (
  <Tree>
    <TreeHeader><span>标签 &amp; 属性</span><span>描述</span></TreeHeader>
    <TreeRoot>工程</TreeRoot>
    {nodes.map(n => (
      <TreeRow key={n.label} $depth={n.depth}>
        <Toggle type="button" aria-label={n.label} as={n.open || n.closed ? 'button' : 'span'}>
          {n.open && <Chevron dir="down" />}
          {n.closed && <Chevron dir="right" tone="#a0a0a0" />}
        </Toggle>
        <NodeBody $selected={n.selected} $bold={n.bold}>
          {n.eye && <Eye off={n.eye === 'off'} blue={n.selected} />}
          <Icons>{n.icons.map(k => <React.Fragment key={k}>{nodeArt[k]}</React.Fragment>)}</Icons>
          <span>{n.label}</span>
        </NodeBody>
      </TreeRow>
    ))}
  </Tree>
);

const Properties = () => (
  <PropArea>
    <PropFrame>
      <PropMain>
        <PropHeader><span>属性</span><span>值</span></PropHeader>
        <PropScroll>
          <PropTable>
            <colgroup><col style={{ width: 20 }} /><col style={{ width: 167 }} /><col /></colgroup>
            <tbody>
              {props.map(p =>
                p.value === undefined ? (
                  <tr key={p.name}><PropCategory colSpan={3}>{p.name}</PropCategory></tr>
                ) : (
                  <tr key={p.name}>
                    <PropToggle>{p.toggle && <Toggle type="button" aria-label="展开"><Chevron dir="right" tone="#a0a0a0" /></Toggle>}</PropToggle>
                    <PropName $bg={p.nameBg ?? p.bg ?? '#fff'}>{p.name}</PropName>
                    <PropValue $bg={p.bg ?? '#fff'} $bound={p.bound}>{p.value}</PropValue>
                  </tr>
                )
              )}
            </tbody>
          </PropTable>
        </PropScroll>
      </PropMain>
      <ScrollBar>
        <button type="button" aria-label="向上滚动"><Chevron dir="up" tone="#505050" /></button>
        <ScrollTrack><div /></ScrollTrack>
        <button type="button" aria-label="向下滚动"><Chevron dir="down" tone="#505050" /></button>
      </ScrollBar>
    </PropFrame>
  </PropArea>
);

const SheetGrid = () => (
  <GridFrame>
    <Grid>
      <colgroup>
        <col style={{ width: 50 }} />
        {columns.map(([name, w]) => <col key={name} style={{ width: w }} />)}
      </colgroup>
      <thead>
        <tr><ColHead />{columns.map(([name]) => <ColHead key={name}>{name}</ColHead>)}</tr>
      </thead>
      <tbody>
        {sheet.map((row, r) => (
          <Row key={r} $h={row.h}>
            <RowHead>{r + 1}</RowHead>
            {columns.map(([name], c) =>
              r === 4 && c === 0 ? (
                <Cell key={name}>
                  <CellCombo>
                    <select aria-label="A5"><option>{row.cells[0]}</option></select>
                    <Chevron dir="down" tone="#606060" />
                  </CellCombo>
                </Cell>
              ) : (
                <Cell key={name} $band={r === 4} $bandStart={c === 1} $current={r === 5 && name === 'J'}>{row.cells[c]}</Cell>
              )
            )}
          </Row>
        ))}
      </tbody>
    </Grid>
  </GridFrame>
);

export default function App() {
  return (
    <Window>
      <GlobalStyle />
      <TitleBar><AppLogo /><h1>FreeCAD Link Branch</h1></TitleBar>
      <MenuBar>{menus.map(m => <MenuItem key={m} type="button">{m}</MenuItem>)}</MenuBar>
      <Toolbars />
      <Main>
        <Dock>
          <DockTitle>
            <h2>组合浏览器</h2>
            <DockButtons>
              <button type="button" aria-label="折叠"><svg width="12" height="12" fill="none"><path d="M3 2.5h6.5v7H3zM3 5.5h6" stroke="#999" /></svg></button>
              <button type="button" aria-label="浮动"><svg width="12" height="12" fill="none"><path d="M2.5 4.5h4v4h-4zM5 4V2.500h4.500v4H7" stroke="#888" /></svg></button>
              <button type="button" aria-label="关闭"><svg width="12" height="12" fill="none"><path d="M3 3l6 6M9 3l-6 6" stroke="#555" strokeWidth="1.5" /></svg></button>
            </DockButtons>
          </DockTitle>
          <Tabs><Tab type="button" $active>模型</Tab><Tab type="button">任务</Tab></Tabs>
          <TabPane>
            <ModelTree />
            <Properties />
          </TabPane>
        </Dock>
        <SheetWindow>
          <SheetTitle>
            <TableArt s={16} />
            <h2>Spreadsheet*</h2>
            <Caption>
              <CaptionButton type="button" aria-label="最小化"><svg width="12" height="6"><rect x=".5" y=".5" width="10" height="4" rx="1" fill="#fff" stroke="#4a5568" /></svg></CaptionButton>
              <CaptionButton type="button" aria-label="最大化"><svg width="12" height="10"><path d="M.5.5h10v8h-10zM3.5 3.5h4v2h-4z" fill="#fff" fillRule="evenodd" stroke="#4a5568" /></svg></CaptionButton>
              <CaptionButton type="button" aria-label="关闭" $close />
            </Caption>
          </SheetTitle>
          <SheetBody>
            <FormulaRow>
              <FieldLabel htmlFor="content">内容（C）:</FieldLabel>
              <Field id="content" defaultValue="=(D6 - I6) * 360 / E6" />
              <FieldLabel htmlFor="alias" $gap>别名（A）:</FieldLabel>
              <Field id="alias" $cut defaultValue="" />
            </FormulaRow>
            <SheetGrid />
          </SheetBody>
        </SheetWindow>
      </Main>
      <Note $x={1270} $y={562}>螺旋线（体）的节高要减掉一个踏步高</Note>
      <Note $x={716} $y={727}>螺旋体的总高要剪掉2个台阶踏步高</Note>
      <Arrows width="1300" height="800" viewBox="0 0 1300 800" fill="#ed1c24" aria-hidden="true">
        <path d="M873 162L900 168.500 895 172.500 1282 479 1280 480 888 180 885.500 187z" />
        <path d="M543 756L556.500 731.500 559.500 738.500 645 682.500 565.500 746.500 570.500 750.500z" />
      </Arrows>
    </Window>
  );
}
